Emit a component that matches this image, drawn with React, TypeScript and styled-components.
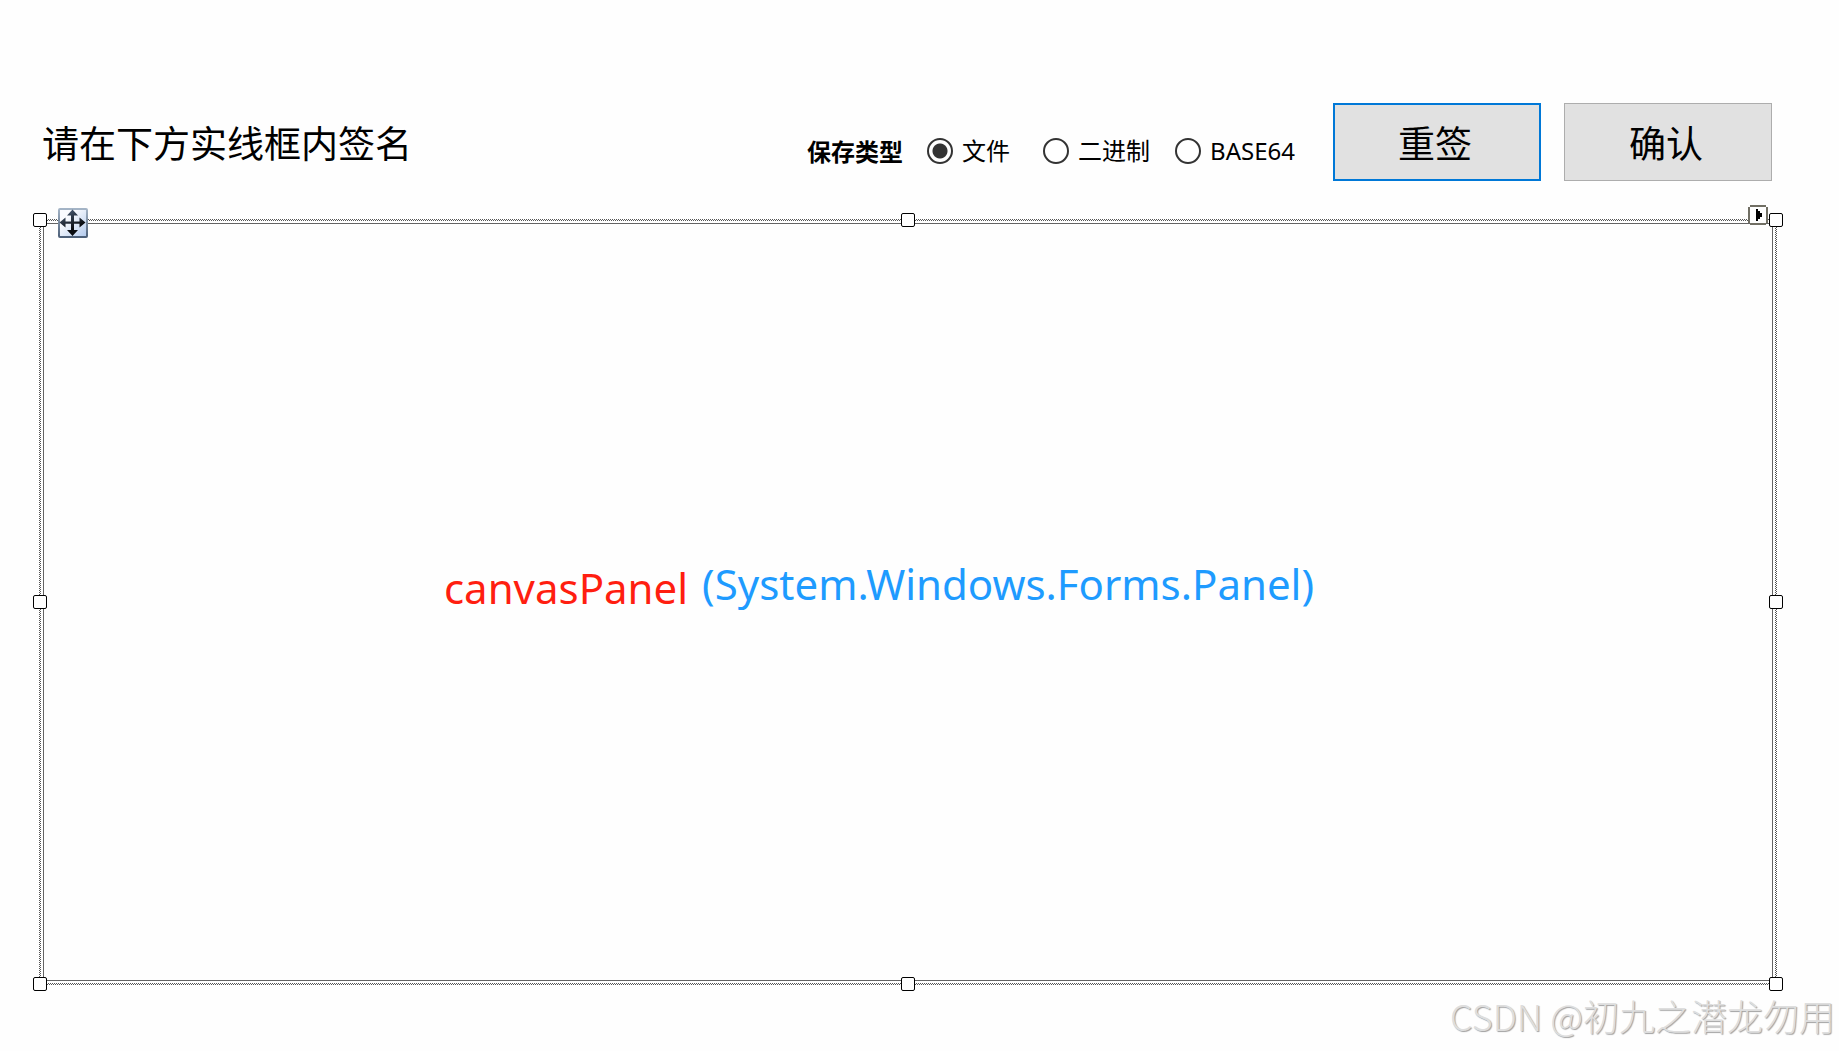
import React, { useState } from "react";
import styled, { createGlobalStyle } from "styled-components";

const GlobalStyle = createGlobalStyle`
  * { box-sizing: border-box; }
  body {
    margin: 0;
    background: #fefefe;
    color: #000;
    font-family: "Noto Sans", "Noto Sans CJK SC", sans-serif;
  }
`;

const Page = styled.main`
  position: relative;
  display: flex;
  flex-direction: column;
  min-height: 100vh;
  padding: 103px 62px 66px 39px;
`;

const Toolbar = styled.header`
  display: flex;
  align-items: center;
  padding: 0 5px 0 3px;
  margin-bottom: 38px;
`;

const Title = styled.h1`
  flex: 1;
  margin: 0;
  font: 400 37px/56px "Noto Sans CJK SC", sans-serif;
`;

const SaveType = styled.fieldset`
  display: flex;
  align-items: center;
  margin: 0 30px 0 0;
  padding: 18px 0 0;
  border: 0;
  font-size: 24px;
  line-height: 32px;
`;

const Legend = styled.span`
  margin-right: 24px;
  font: 700 24px/32px "Noto Sans CJK SC", sans-serif;
`;

const Option = styled.label<{ $gap: number }>`
  display: flex;
  align-items: center;
  gap: 9px;
  margin-right: ${(p) => p.$gap}px;
`;

const Radio = styled.input`
  appearance: none;
  width: 26px;
  height: 26px;
  margin: 0;
  border: 2px solid #333;
  border-radius: 50%;
  background: #fff;
  &:checked {
    background: radial-gradient(circle, #333 7px, #fff 8px);
  }
`;

const Buttons = styled.div`
  display: flex;
  gap: 23px;
`;

const Button = styled.button<{ $primary?: boolean }>`
  width: 208px;
  height: 78px;
  padding: 0 4px 0 0;
  border: ${(p) => (p.$primary ? "2px solid #0078d7" : "1px solid #adadad")};
  background: #e1e1e1;
  color: #000;
  font: 400 37px/56px "Noto Sans CJK SC", sans-serif;
`;

const Selection = styled.section`
  position: relative;
  flex: 1;
  display: flex;
  padding: 2px;
  background: repeating-conic-gradient(#555 0 25%, #fefefe 0 50%) 0 0 / 2px 2px;
`;

const Gap = styled.div`
  flex: 1;
  display: flex;
  padding: 2px;
  background: #fefefe;
`;

const CanvasPanel = styled.div`
  flex: 1;
  display: flex;
  align-items: center;
  justify-content: center;
  gap: 14px;
  padding: 0 58px 36px 0;
  border: 1px solid #646464;
  font-size: 42px;
  line-height: 56px;
`;

const PanelName = styled.span`
  padding-top: 8px;
  color: #ff1e10;
`;

const PanelType = styled.span`
  color: #1e9bff;
`;

const HandleLayer = styled.div`
  position: absolute;
  inset: 1px;
  pointer-events: none;
`;

const Handle = styled.span<{ $x: number; $y: number }>`
  position: absolute;
  left: ${(p) => p.$x}%;
  top: ${(p) => p.$y}%;
  width: 14px;
  height: 14px;
  transform: translate(-50%, -50%);
  border: 1px solid #000;
  border-radius: 2px;
  background: #fff;
`;

const MoveGlyph = styled.svg`
  position: absolute;
  left: 19px;
  top: -11px;
`;

const SmartTag = styled.svg`
  position: absolute;
  right: 9px;
  top: -14px;
`;

const Watermark = styled.p`
  position: absolute;
  right: 4px;
  bottom: 8px;
  margin: 0;
  color: #dedede;
  font: 300 36px/56px "Noto Sans CJK SC", sans-serif;
  text-shadow: 1px 1px 1px #a0a0a0;
`;

const options = [
  { id: "file", label: "文件", gap: 33 },
  { id: "binary", label: "二进制", gap: 25 },
  { id: "base64", label: "BASE64", gap: 8 },
];

const handles = [
  [0, 0], [50, 0], [100, 0],
  [0, 50], [100, 50],
  [0, 100], [50, 100], [100, 100],
];

export default function App() {
  const [type, setType] = useState("file");
  return (
    <Page>
      <GlobalStyle />
      <Toolbar>
        <Title>请在下方实线框内签名</Title>
        <SaveType aria-labelledby="save-type">
          <Legend id="save-type">保存类型</Legend>
          {options.map((o) => (
            <Option key={o.id} htmlFor={o.id} $gap={o.gap}>
              <Radio
                type="radio"
                id={o.id}
                name="saveType"
                checked={type === o.id}
                onChange={() => setType(o.id)}
              />
              {o.label}
            </Option>
          ))}
        </SaveType>
        <Buttons>
          <Button type="button" $primary>重签</Button>
          <Button type="button">确认</Button>
        </Buttons>
      </Toolbar>
      <Selection>
        <Gap>
          <CanvasPanel>
            <PanelName>canvasPanel</PanelName>
            <PanelType>(System.Windows.Forms.Panel)</PanelType>
          </CanvasPanel>
        </Gap>
        <HandleLayer>
          {handles.map(([x, y]) => (
            <Handle key={`${x}-${y}`} $x={x} $y={y} />
          ))}
        </HandleLayer>
        <MoveGlyph width="30" height="30" viewBox="0 0 30 30" aria-hidden="true">
          <defs>
            <linearGradient id="face" x1="0" y1="0" x2="1" y2="1">
              <stop offset="0.3" stopColor="#fafbfe" />
              <stop offset="1" stopColor="#b0c8ec" />
            </linearGradient>
            <linearGradient id="edge" x1="0" y1="0" x2="0" y2="1">
              <stop offset="0" stopColor="#a4b4c6" />
              <stop offset="1" stopColor="#4d6079" />
            </linearGradient>
            <linearGradient id="arrows" gradientUnits="userSpaceOnUse" x1="8" y1="2" x2="17" y2="20">
              <stop offset="0" stopColor="#4a5c75" />
              <stop offset="1" stopColor="#0a0c10" />
            </linearGradient>
          </defs>
          <rect x="1" y="1" width="28" height="28" rx="1" fill="url(#face)" stroke="url(#edge)" strokeWidth="2" />
          <path
            fill="url(#arrows)"
            d="M14.5 1.5 20 7.5H16V13.500H21.500V9.500L27.500 14.500 21.500 19.500V15.800H16V22H20L14.500 28 9 22H13V15.800H7.500V19.500L1.500 14.500 7.500 9.500V13.500H13V7.500H9Z"
          />
        </MoveGlyph>
        <SmartTag width="20" height="20" viewBox="0 0 20 20" aria-hidden="true" shapeRendering="crispEdges">
          <path fill="#fefefe" d="M2 2H18V18H2Z" />
          <path fill="#716f64" d="M2 0H18V2H2ZM2 18H18V20H2ZM0 2H2V18H0ZM18 2H20V18H18Z" />
          <path fill="#000" d="M8 4H10V6H12V8H14V12H12V14H10V16H8Z" />
        </SmartTag>
      </Selection>
      <Watermark>CSDN @初九之潜龙勿用</Watermark>
    </Page>
  );
}
